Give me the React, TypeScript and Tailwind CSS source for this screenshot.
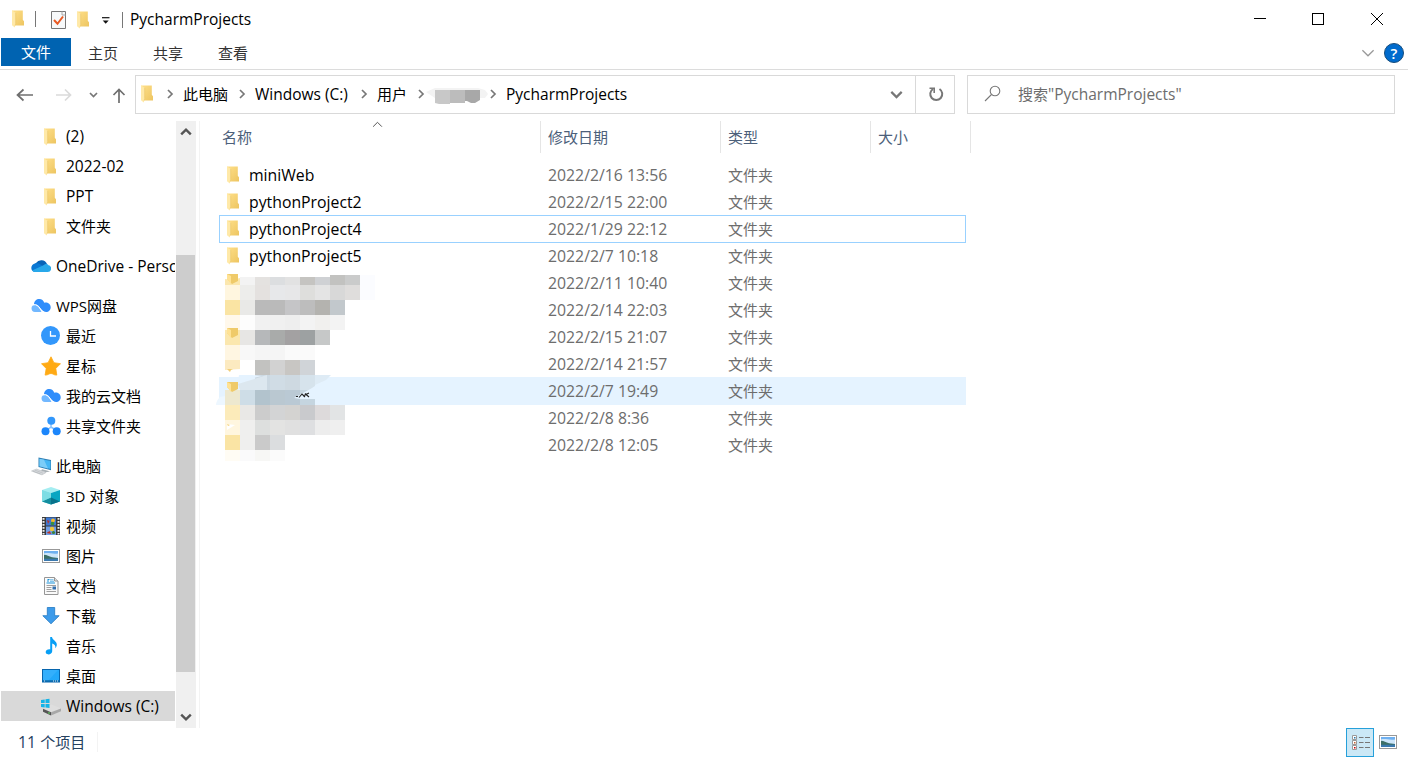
import type { ReactNode } from 'react';
import clsx from 'clsx';

const LATIN = 'text-[15.8px]';
const LATIN_NARROW = 'text-[15.5px]';

function FolderIcon() {
  return (
    <svg width="12" height="18" viewBox="0 0 12 18" className="shrink-0">
      <defs>
        <linearGradient id="folder" x1="0" y1="0" x2="1" y2="1">
          <stop offset="0" stopColor="#ffe08a" />
          <stop offset="1" stopColor="#edc561" />
        </linearGradient>
      </defs>
      <path d="M0 .5h10.8v9.3l1.2 1.4v4.3H3.5L0 14z" fill="url(#folder)" />
      <path d="M0 .5l3.7 2.3v10.8l-.9 3.9L0 15.3z" fill="#ffe9a8" />
      <path d="M3.7 2.8v10.8l-.6 2" fill="none" stroke="#eac468" strokeWidth=".6" />
    </svg>
  );
}

function Chevron({ dir, size = 10, color = '#777', weight = 1.7 }: { dir: 'up' | 'down' | 'right'; size?: number; color?: string; weight?: number }) {
  const d = { up: 'M1 7l4-4 4 4', down: 'M1 3l4 4 4-4', right: 'M3 1l4 4-4 4' }[dir];
  return (
    <svg width={size} height={size} viewBox="0 0 10 10" className="shrink-0">
      <path d={d} fill="none" stroke={color} strokeWidth={weight} />
    </svg>
  );
}

function Icon({ children }: { children: ReactNode }) {
  return (
    <svg width="20" height="20" viewBox="0 0 20 20" className="shrink-0">
      {children}
    </svg>
  );
}

const oneDrive = (
  <Icon>
    <path d="M5 7a6.3 6.3 0 0 1 11 1l-4 4-8-4z" fill="#0864b8" />
    <path d="M4.5 7.3c2-.4 3.5.2 5 1.2l4 2.7-9 4.8C-1 16-1.2 8.3 4.5 7.3z" fill="#0a78d4" />
    <path d="M12 9.6c2-2.2 4.600-2 5.500-.3 2.600.7 3 2.800 2.500 4.200-.4 1.700-1.800 2.500-3.200 2.500H4.500c-1.500 0-2.800-.6-3.500-1.500z" fill="#28a8ea" />
  </Icon>
);

const cloud = (
  <Icon>
    <path d="M3 8.500C3 5 5.500 3 8.300 3c2.500 0 4.300 1.500 4.900 3.700 3-.9 6.500 1.300 6.500 4.500 0 2.600-1.800 4.800-4.700 4.800-2.800 0-4.500-2.200-6.500-4.700C7 9.200 5.300 8.200 3 8.500z" fill="#2f8dfb" />
    <path d="M.5 12.300C.5 9.800 2.500 8.800 4.200 9c2.200.2 4.500 3.200 6.300 7H4C1.800 16 .5 14.400.5 12.300z" fill="#72b8ff" />
    <path d="M2.500 8.800c3-.7 5 1 6.500 3.400 1.200 1.900 2.300 3.200 4 4" fill="none" stroke="#fff" strokeWidth="1" />
  </Icon>
);

const recent = (
  <Icon>
    <circle cx="9.500" cy="9.500" r="9.500" fill="#3297fb" />
    <path d="M9.500 5v5H15" fill="none" stroke="#fff" strokeWidth="1.300" />
  </Icon>
);

const star = (
  <Icon>
    <path d="M10 .8l2.900 5.900 6.600 1-4.700 4.700 1 6.700c-3 .1-4-1.600-5.800-1.600s-3 1.700-5.900 1.600l1.100-6.700L.5 7.700l6.600-1z" fill="#ffaa14" stroke="#ffaa14" strokeLinejoin="round" strokeWidth=".8" />
  </Icon>
);

const share = (
  <Icon>
    <path d="M10 6v5l-5 3.500M10 11l5.500 3.500" fill="none" stroke="#86c2ff" strokeWidth="1.500" />
    <circle cx="10.300" cy="4.800" r="4" fill="#3297fb" />
    <circle cx="4.500" cy="15.200" r="4" fill="#1c86fb" />
    <circle cx="15.700" cy="15.200" r="4" fill="#1c86fb" />
  </Icon>
);

const computer = (
  <Icon>
    <path d="M7.500 1.500l13 2.600v10.200L7.500 11z" fill="#2f7fb4" />
    <path d="M8.500 2.800l11 2.200v8L8.500 10.200z" fill="#45b6f4" />
    <path d="M8.500 2.800L13 3.700l4 8.700-8.500-2.200z" fill="#7ccdf8" />
    <path d="M11 13.300l5 1.300 3 1-4 .6-5-1.500z" fill="#a9b1b6" />
    <path d="M.5 15l5-2 9.500 3.600-4 2.300z" fill="#d7dadd" stroke="#b2b7bb" strokeWidth=".5" />
    <path d="M2 15.200l7.500 2.700M4 14.200l8 3" stroke="#9fa5a9" strokeWidth=".4" />
  </Icon>
);

const cube = (
  <Icon>
    <path d="M1 4l9-3 9 3-9 3z" fill="#a4edf1" />
    <path d="M1 4l9 3v11.500l-9-3z" fill="#5cd0da" />
    <path d="M19 4l-9 3v11.500l9-3z" fill="#08a6c2" />
    <path d="M1 15.500l9-4v7z" fill="#148d9e" />
    <path d="M10 11.500l9 4-9 3z" fill="#08728b" />
    <path d="M1 4l9 3v4.500L1 15.500z" fill="#8ce3e8" opacity=".7" />
  </Icon>
);

const video = (
  <Icon>
    <rect x="1" y="1" width="18" height="18" fill="#3a3a3a" />
    <rect x="5" y="1.500" width="10" height="8" fill="#3d78d4" />
    <rect x="5" y="10.500" width="10" height="8.500" fill="#6f9fe6" />
    <path d="M2.500 2v16.500M17.500 2v16.500" stroke="#eee" strokeWidth="2" strokeDasharray="1.800 1.200" />
    <circle cx="12" cy="4.500" r="2" fill="#f3b62c" />
    <circle cx="11.500" cy="7.500" r="1.800" fill="#38903c" />
    <path d="M6 4l2.500 1-1.500 3zM5.500 17l3-2 2 3z" fill="#b83227" />
    <circle cx="11" cy="13" r="2.200" fill="#f0c33a" />
    <circle cx="12.500" cy="16.500" r="1.600" fill="#36833c" />
  </Icon>
);

function PictureArt() {
  return (
    <>
      <rect x="1.500" y="3.500" width="17" height="13" fill="#fff" stroke="#989898" />
      <rect x="3" y="5" width="14" height="10" fill="#6fb0f0" />
      <path d="M3 7.500c4-1.500 8 1 14 0V13H3z" fill="#cce5fa" />
      <path d="M3 8.800c3 0 5 2 8 2.400l6 .8v2H3z" fill="#3c6f67" />
      <path d="M3 12.800c4-.5 8 .6 14-.3V15H3z" fill="#3a79af" />
    </>
  );
}

const documentIcon = (
  <Icon>
    <path d="M3.500 1.500h10l3.500 3.500v13.500H3.500z" fill="#fafafa" stroke="#969696" />
    <path d="M13.500 1.500V5H17" fill="#ddd" stroke="#969696" />
    <path d="M6.500 3.500h2M6 5h2M5.500 7h8.500" stroke="#1992d9" strokeWidth="1.200" />
    <path d="M9 3.800h3.500M9 5.300h4" stroke="#53afe4" strokeWidth=".9" />
    <path d="M5.500 9.500H15M5.500 11.500h5M5.500 13.500h5M5.500 15.500H15" stroke="#a0a0a0" strokeWidth="1" />
    <rect x="11.500" y="10.500" width="3.500" height="3" fill="#356fad" />
  </Icon>
);

const download = (
  <Icon>
    <path d="M6.300 1.500h7.400v8.200h4.500L10 17.800 1.800 9.700h4.500z" fill="#3d9bea" stroke="#2278c2" strokeWidth=".8" />
  </Icon>
);

const music = (
  <Icon>
    <path d="M9.200 1h1.800c.3 3 4.800 4 4.800 7.500 0 1.600-.6 2.800-1.500 3.700.5-2.600-.6-4-3.100-4.800v7.900c0 2-1.900 3.100-3.800 3.100-1.700 0-2.700-1-2.700-2.300 0-1.700 1.900-3 4.500-2.700z" fill="#089ff5" />
  </Icon>
);

const desktop = (
  <Icon>
    <rect x="1.500" y="3.500" width="17" height="12.500" fill="#22a8fa" stroke="#0765ad" />
    <path d="M2 4h15L7 15H2z" fill="#4ebaff" opacity=".4" />
    <path d="M2 15h16" stroke="#075a98" strokeWidth="1.200" />
    <path d="M3 15h1M12 15h1M14 15h1M16 15h1" stroke="#fff" strokeWidth=".9" />
  </Icon>
);

const drive = (
  <Icon>
    <path d="M2 12.700l8.500-4.200 9.500 4-10 4.300z" fill="#dedede" />
    <path d="M2 12.700l8 3.500v3.300l-8-3.700z" fill="#565656" />
    <path d="M10 16.200l10-3.700v2.700L10 19.500z" fill="#a8a8a8" />
    <circle cx="8" cy="17" r=".8" fill="#60ed5b" />
    <path d="M0 3.900l3.700-.5V7H0zM4.500 3.300l4-.6V7h-4zM0 7.900h3.700v3.500L0 10.900zM4.500 7.900h4V12l-4-.5z" fill="#14b4e8" />
  </Icon>
);

type NavItem = { label: string; icon: ReactNode; level?: number; gap?: boolean; latin?: boolean; selected?: boolean };

const folder = (
  <span className="flex w-5 pl-[3px] pt-px">
    <FolderIcon />
  </span>
);

const navItems: NavItem[] = [
  { label: '(2)', icon: folder, latin: true },
  { label: '2022-02', icon: folder, latin: true },
  { label: 'PPT', icon: folder, latin: true },
  { label: '文件夹', icon: folder },
  { label: 'OneDrive - Personal', icon: oneDrive, level: 1, gap: true, latin: true },
  { label: 'WPS网盘', icon: cloud, level: 1, gap: true },
  { label: '最近', icon: recent },
  { label: '星标', icon: star },
  { label: '我的云文档', icon: cloud },
  { label: '共享文件夹', icon: share },
  { label: '此电脑', icon: computer, level: 1, gap: true },
  { label: '3D 对象', icon: cube },
  { label: '视频', icon: video },
  { label: '图片', icon: <Icon><PictureArt /></Icon> },
  { label: '文档', icon: documentIcon },
  { label: '下载', icon: download },
  { label: '音乐', icon: music },
  { label: '桌面', icon: desktop },
  { label: 'Windows (C:)', icon: drive, latin: true, selected: true },
];

const files = [
  { name: 'miniWeb', date: '2022/2/16 13:56' },
  { name: 'pythonProject2', date: '2022/2/15 22:00' },
  { name: 'pythonProject4', date: '2022/1/29 22:12', focused: true },
  { name: 'pythonProject5', date: '2022/2/7 10:18' },
  { date: '2022/2/11 10:40' },
  { date: '2022/2/14 22:03' },
  { date: '2022/2/15 21:07' },
  { date: '2022/2/14 21:57' },
  { date: '2022/2/7 19:49', hovered: true },
  { date: '2022/2/8 8:36' },
  { date: '2022/2/8 12:05' },
];

// Each row is a strip of 15px blocks, '' leaves the block empty
const blocks: string[][] = [
  ['', '#f3f3f3', '#e4e2e0', '#dcdee0', '#e2e2e2', '#c5c4c1', '#cfd1d4', '#c2c2c0', '#cacbcb', '#fbfcff'],
  ['#fff6df', '#ededeb', '#e4e1df', '#e7e8ea', '#e7e7e8', '#dededc', '#e4e4e4', '#d8d8d8', '#dfdddc', '#fbfcff'],
  ['#fae4a3', '#e9e9e7', '#bababa', '#bababa', '#c5c5c7', '#bdbdbd', '#b4b3af', '#c2c8cc'],
  ['#fff8eb', '#fdfdfd', '#f1f1f1', '#f0f0f0', '#eeeeee', '#f3f3f3', '#f1f0ee', '#f3f3f3'],
  ['#fbe7ae', '#e7e6e4', '#b6b8ba', '#a9abaa', '#a3a1a2', '#9da1a2', '#c6c8c8'],
  ['#fff6e2', '#f8f8f8', '#f5f5f5', '#f5f5f5', '#fafafa', '#fafafa'],
  ['', '', '#c2c2c0', '#d2d2d2', '#c8c6c3', '#d0d4d8'],
  ['', '', '#cbd8e2', '#d0dce5', '#ced9e1', '#d6e3ec'],
  ['#ede8cf', '#cedde7', '#b2c3cd', '#bac8d1', '#bac9d4', '#c5d5e0'],
  ['#fcebba', '#e9e8e6', '#cccccc', '#d3d4d5', '#d4d3d1', '#c9cacd', '#dddadb', '#e2e4e5'],
  ['#fff6df', '#efefee', '#dddfde', '#e3e3e2', '#e0e0e0', '#dedfe1', '#ededed', '#efefef'],
  ['#fae4a4', '#efefee', '#cacaca', '#dbdddf'],
  ['#fffcf4', '#fafafb', '#f7f7f5', '#fbfbfb'],
];

function CensoredNames() {
  return (
    <svg width="170" height="192" viewBox="215 272 170 192" className="pointer-events-none absolute left-[15px] top-[151px]">
      {blocks.map((row, r) =>
        row.map((fill, c) => {
          if (!fill) return null;
          const top = r === 0 ? (c >= 7 ? 275 : 277) : 270 + r * 15;
          const height = r === 0 ? 285 - top : r === 12 ? 11 : 15;
          return <rect key={`${r}-${c}`} x={225 + c * 15} y={top} width="15" height={height} fill={fill} />;
        }),
      )}
      <path d="M225 360h15v9l-15 1z" fill="#fceac0" />
      <path d="M227 369h6l-2 1-1 2z" fill="#f1ce78" />

      {/* Folder corners left visible between the blocks */}
      <path d="M225 279l7 1 8-2v7h-15zM225 336h8l4-3h3v12h-15z" fill="#fbe7ae" />
      {[274, 328, 382].map((y) => (
        <g key={y}>
          <path d={`M227 ${y}h11v7l-6 3-5-5z`} fill="#efca69" />
          <path d={`M227 ${y}l4 2v8l-4-5z`} fill="#ffe294" />
        </g>
      ))}

      {/* Hovered row showing through the smudge */}
      <path d="M238 384l29-9v15h-27z" fill="#dce7ef" />
      <path d="M238 381l24-5-10-1h-13z" fill="#e5f3ff" />
      <path d="M220 397l5-1v9h-9q0-4 4-8z" fill="#edf7ff" />
      <path d="M312 388l3-2v13h-15l-6-1z" fill="#e5f3ff" />
      <path d="M315 375h16l-5 5-11 5z" fill="#deebf5" />
      <path d="M296 396.500h2M299 397.500l3-3.500 3 3M303 396l6-3M305 393.500l4 3.500" fill="none" stroke="#222" strokeWidth="1.100" />
      <path d="M227 424l8 1-8 5z" fill="#fff" />
      <path d="M227 424l3 1-2 1z" fill="#f5cf73" />
    </svg>
  );
}

function TitleBar() {
  return (
    <div className="flex h-[38px] items-center">
      <div className="ml-3 flex items-center">
        <FolderIcon />
        <span className="ml-[11px] h-4 w-px bg-[#777]" />
        <svg width="15" height="18" viewBox="0 0 15 18" className="ml-[15px] mt-0.5">
          <path d="M.5.500h14v17H.5z" fill="#f7f9fa" stroke="#777" />
          <path d="M11 .5V4h3.500" fill="none" stroke="#aaa" />
          <path d="M3 9l3.500 3.800L12 5.500" fill="none" stroke="#e85a24" strokeWidth="2" />
        </svg>
        <span className="ml-[11px] mt-0.5">
          <FolderIcon />
        </span>
        <svg width="8" height="8" viewBox="0 0 8 8" className="ml-[13px] mt-1">
          <path d="M0 .7h7.500" stroke="#111" strokeWidth="1.200" />
          <path d="M.7 3.500h6L3.700 6.700z" fill="#111" />
        </svg>
        <span className="ml-3 mt-0.5 h-4 w-px bg-[#777]" />
        <span className={clsx('ml-[7px]', LATIN_NARROW)}>PycharmProjects</span>
      </div>
      <svg width="130" height="14" viewBox="0 0 130 14" className="ml-auto mr-[24px] shrink-0" fill="none" stroke="#000">
        <path d="M0 6.500h12" />
        <rect x="58.500" y="1.500" width="11" height="11" />
        <path d="M117 1l12 12M129 1l-12 12" />
      </svg>
    </div>
  );
}

function RibbonTabs() {
  return (
    <div className="flex h-8 items-start border-b border-[#dcdcdc] text-[#333]">
      <div className="ml-px flex h-7 w-[70px] items-center justify-center bg-[#0063b1] text-white">文件</div>
      <div className="ml-[17px] flex h-[30px] items-center gap-[35px]">
        <span>主页</span>
        <span>共享</span>
        <span>查看</span>
      </div>
      <div className="ml-auto mr-1 flex h-[30px] items-center gap-[9px]">
        <Chevron dir="down" size={14} color="#999" weight={0.9} />
        <span className="flex size-5 items-center justify-center rounded-full border border-[#174d7c] bg-[#006bcd] text-[15px] font-semibold leading-none text-white">?</span>
      </div>
    </div>
  );
}

function AddressBar() {
  return (
    <div className="flex h-[51px] items-start pt-[5px]">
      <div className="flex h-[39px] w-[135px] shrink-0 items-center">
        <svg width="118" height="16" viewBox="0 0 118 16" className="ml-[15px]" fill="none" strokeWidth="1.700">
          <path d="M2.500 8h15.500M8.500 2.500l-6 5.500 6 5.500" stroke="#6f6f6f" />
          <path d="M41 8h14M50 2.500L55.500 8 50 13.500" stroke="#dadada" />
          <path d="M75 6l3.500 3.500L82 6" stroke="#777" />
          <path d="M104 16V2.500M98.500 8l5.500-5.500L109.500 8" stroke="#6f6f6f" />
        </svg>
      </div>
      <div className="flex h-[39px] w-[820px] shrink-0 items-center border border-[#d9d9d9] pb-0.5">
        <div className="ml-[5px] flex items-center">
          <FolderIcon />
          <span className="ml-3">
            <Chevron dir="right" />
          </span>
          <span className="ml-[8px] w-[46px]">此电脑</span>
          <span className="ml-[8px]">
            <Chevron dir="right" />
          </span>
          <span className={clsx('ml-[8px] w-[96px] whitespace-nowrap', LATIN_NARROW)}>Windows (C:)</span>
          <span className="ml-[8px]">
            <Chevron dir="right" />
          </span>
          <span className="ml-[8px] w-[30px]">用户</span>
          <span className="ml-[9px]">
            <Chevron dir="right" />
          </span>
          <svg width="62" height="17" viewBox="0 0 62 17" className="mt-1">
            <path d="M0 5l9-4h43l7 2 3 4-3 4H9z" fill="#f3f3f3" />
            <path d="M9 3h15v14H13l-4-1z" fill="#c8c8c8" />
            <path d="M24 3h15v13H24z" fill="#bcbcbc" />
            <path d="M39 3h15v10l-5 3h-4l-4-2h-2z" fill="#a8a8a8" />
          </svg>
          <Chevron dir="right" />
          <span className={clsx('ml-[8px]', LATIN_NARROW)}>PycharmProjects</span>
        </div>
        <span className="ml-auto mr-3 mt-0.5">
          <Chevron dir="down" size={13} />
        </span>
        <div className="-mb-0.5 flex h-[37px] w-[39px] items-center justify-center border-l border-[#d9d9d9] pl-0.5">
          <svg width="17" height="17" viewBox="0 0 17 17" fill="none" stroke="#777" strokeWidth="2">
            <path d="M11.500 3a6 6 0 1 1-6.500 0" />
            <path d="M1.500 2.200h4.700v4.800" strokeWidth="1.600" />
          </svg>
        </div>
      </div>
      <div className="ml-3 flex h-[39px] w-[428px] items-center border border-[#d9d9d9] pb-0.5 text-[#6d6d6d]">
        <svg width="17" height="17" viewBox="0 0 17 17" className="ml-4" fill="none" stroke="#777" strokeWidth="1.100">
          <circle cx="11" cy="6" r="4.800" />
          <path d="M7.500 9.500L1 16" />
        </svg>
        <span className="ml-[17px]">
          搜索<span className={LATIN_NARROW}>"PycharmProjects"</span>
        </span>
      </div>
    </div>
  );
}

function Sidebar() {
  return (
    <div className="flex h-[607px] w-[200px] shrink-0 border-r border-[#f3f3f3]">
      <div className="ml-px w-[174px] overflow-hidden">
        {navItems.map((item) => (
          <div
            key={item.label}
            className={clsx(
              'flex h-[30px] items-center gap-[5px] whitespace-nowrap',
              item.level === 1 ? 'pl-[30px]' : 'pl-10',
              item.gap && 'mt-2.5',
              item.selected && 'bg-[#d9d9d9]',
              item.latin && LATIN_NARROW,
            )}
          >
            {item.icon}
            <span>{item.label}</span>
          </div>
        ))}
      </div>
      <div className="ml-px flex w-5 flex-col items-center justify-between bg-[#f0f0f0] py-[5px] pr-px">
        <Chevron dir="up" size={12} color="#555" weight={2} />
        <div className="mt-[117px] w-[19px] grow bg-[#cdcdcd]" />
        <div className="mt-[39px] h-3">
          <Chevron dir="down" size={12} color="#555" weight={2} />
        </div>
      </div>
    </div>
  );
}

function FileList() {
  return (
    <div className="relative w-[771px]">
      <div className="flex h-8 items-center text-[#4c607a]">
        <div className="flex h-full w-[341px] items-center border-r border-[#e5e5e5] pl-[22px]">名称</div>
        <div className="flex h-full w-[180px] items-center border-r border-[#e5e5e5] pl-[7px]">修改日期</div>
        <div className="flex h-full w-[150px] items-center border-r border-[#e5e5e5] pl-[7px]">类型</div>
        <div className="flex h-full w-[100px] items-center border-r border-[#e5e5e5] pl-[7px]">大小</div>
      </div>
      <span className="absolute left-[172px] top-[-2px]">
        <Chevron dir="up" size={11} color="#555" weight={0.9} />
      </span>
      <div className="ml-[19px] mt-2 w-[747px]">
        {files.map((file) => (
          <div
            key={file.date}
            className={clsx(
              '-mb-px flex h-7 items-center border',
              file.focused ? 'relative border-[#99d1ff]' : 'border-transparent',
              file.hovered && 'bg-[#e5f3ff]',
            )}
          >
            <div className="flex w-[328px] items-center pl-[7px]">
              {file.name && (
                <>
                  <FolderIcon />
                  <span className={clsx('ml-[10px]', LATIN)}>{file.name}</span>
                </>
              )}
            </div>
            <div className={clsx('w-[180px] text-[#6d6d6d]', LATIN)}>{file.date}</div>
            <div className="text-[#6d6d6d]">文件夹</div>
          </div>
        ))}
      </div>
      <CensoredNames />
    </div>
  );
}

function StatusBar() {
  return (
    <div className="flex h-7 items-center text-[#26415f]">
      <span className="ml-[18px] w-[80px] border-r border-[#f3f3f3]">
        <span className={LATIN}>11 </span>个项目
      </span>
      <div className="ml-auto mr-[10px] flex items-center gap-1">
        <div className="flex h-[29px] w-7 items-center justify-center border border-[#26a0da] bg-[#cbe8f6]">
          <svg width="20" height="18" viewBox="0 0 20 18">
            <path d="M2.500 2.500h4v4h-4zM2.500 7.500h4v4h-4zM2.500 12.500h4v4h-4z" fill="#fff" stroke="#999" />
            <path d="M4 4h1.500v1.500H4z" fill="#2877a8" />
            <path d="M4 9h1.500v1.500H4z" fill="#c46637" />
            <path d="M4 14h1.500v1.500H4z" fill="#d00000" />
            <path d="M9 4.500h4.500M15 4.500h5M9 9.500h4.500M15 9.500h5M9 14.500h4.500M15 14.500h5" stroke="#777" />
          </svg>
        </div>
        <Icon>
          <PictureArt />
        </Icon>
      </div>
    </div>
  );
}

export default function App() {
  return (
    <div className="h-[758px] w-[1408px] overflow-hidden bg-white font-['Open_Sans','Noto_Sans_CJK_SC',sans-serif] text-[15px] leading-5 text-black">
      <TitleBar />
      <RibbonTabs />
      <AddressBar />
      <div className="flex">
        <Sidebar />
        <FileList />
      </div>
      <StatusBar />
    </div>
  );
}
